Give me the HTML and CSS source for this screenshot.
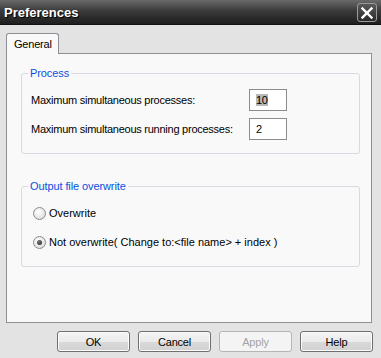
FILE: index.html
```html
<!DOCTYPE html>
<html lang="en">
<head>
  <meta charset="UTF-8">
  <title>Preferences</title>
  <link rel="stylesheet" href="styles.css">
</head>
<body>
  <div class="window">
    <div class="titlebar">
      <span class="title">Preferences</span>
      <span class="close">
        <svg width="12" height="12" viewBox="0 0 12 12">
          <path d="M1.5 1.5 L10.5 10.5 M10.5 1.5 L1.5 10.5" stroke="#fff" stroke-width="2.4" stroke-linecap="square"/>
        </svg>
      </span>
    </div>

    <div class="tabs">
      <span class="tab">General</span>
    </div>

    <div class="panel">
      <fieldset class="group group-process">
        <legend>Process</legend>
        <div class="field-grid">
          <label>Maximum simultaneous processes:</label>
          <span class="box"><span class="sel">10</span></span>
          <label>Maximum simultaneous running processes:</label>
          <span class="box">2</span>
        </div>
      </fieldset>

      <fieldset class="group group-output">
        <legend>Output file overwrite</legend>
        <div class="radio"><span class="dot"></span>Overwrite</div>
        <div class="radio checked"><span class="dot"></span>Not overwrite( Change to:&lt;file name&gt; + index )</div>
      </fieldset>
    </div>

    <div class="actions">
      <button class="btn">OK</button>
      <button class="btn">Cancel</button>
      <button class="btn" disabled>Apply</button>
      <button class="btn">Help</button>
    </div>
  </div>
</body>
</html>
```

FILE: styles.css
```css
body {
  margin: 0;
  background: #e3e3e3;
  font-family: 'Liberation Sans', Arial, sans-serif;
  font-size: 11px;
  letter-spacing: -0.25px;
  color: #000;
}

.window {
  display: flex;
  flex-direction: column;
  height: 358px;
}

.titlebar {
  height: 25px;
  display: flex;
  align-items: center;
  justify-content: space-between;
  padding: 0 4px 0 4px;
  background: linear-gradient(#6a6a6a, #3a3a3a 45%, #1e1e1e);
  border-bottom: 1px solid #111;
  box-sizing: border-box;
}

.title {
  color: #fff;
  font-weight: bold;
  font-size: 13px;
  letter-spacing: 0;
  text-shadow: 1px 1px 1px #000;
}

.close {
  width: 20px;
  height: 19px;
  margin-top: 1px;
  box-sizing: border-box;
  border: 1px solid #9a9a9a;
  border-radius: 3px;
  background: linear-gradient(#5a5a5a, #2a2a2a);
  display: flex;
  align-items: center;
  justify-content: center;
}

.tabs {
  display: flex;
  padding: 8px 0 0 6px;
}

.tab {
  position: relative;
  z-index: 1;
  width: 53px;
  height: 21px;
  margin-bottom: -1px;
  box-sizing: border-box;
  padding: 4px 0 0 7px;
  background: #f9f9f9;
  border: 1px solid #8d8f94;
  border-bottom: none;
  border-radius: 3px 3px 0 0;
  letter-spacing: -0.2px;
}

.panel {
  height: 270px;
  box-sizing: border-box;
  margin: 0 9px 0 6px;
  padding: 12px 11px 0 14px;
  background: #f9f9f9;
  border: 1px solid #8d8f94;
}

.group {
  margin: 0;
  padding: 0 6px 13px 6px;
  border: 1px solid #d5dbe0;
  border-radius: 3px;
  min-width: 0;
}

.group legend {
  padding: 0 2px;
  line-height: 14px;
  color: #0b4fe0;
  letter-spacing: -0.1px;
}

.group-output {
  margin-top: 25px;
  padding-bottom: 15px;
}

.field-grid {
  display: grid;
  grid-template-columns: 218px 38px;
  grid-auto-rows: 22px;
  row-gap: 7px;
  margin: 9px 0 0 3px;
  align-items: center;
}

.box {
  height: 22px;
  box-sizing: border-box;
  border: 1px solid #8c8c8c;
  background: #fff;
  padding: 3px 0 0 6px;
  line-height: 14px;
}

.sel {
  background: #b8b8b8;
}

.radio {
  display: flex;
  align-items: center;
  height: 18px;
  margin: 11px 0 0 5px;
  letter-spacing: 0;
  white-space: pre;
}

.radio + .radio {
  margin-top: 11px;
}

.dot {
  width: 13px;
  height: 13px;
  box-sizing: border-box;
  border-radius: 50%;
  border: 1px solid #8a8a8a;
  background: radial-gradient(circle at 40% 35%, #ffffff, #e6e6e6 60%, #cfcfcf);
  margin-right: 3px;
  display: flex;
  align-items: center;
  justify-content: center;
}

.radio.checked .dot::after {
  content: "";
  width: 5px;
  height: 5px;
  border-radius: 50%;
  background: radial-gradient(circle at 40% 35%, #777, #222);
}

.actions {
  display: flex;
  justify-content: flex-end;
  gap: 8px;
  padding: 8px 8px 0 0;
}

.btn {
  width: 73px;
  height: 21px;
  padding: 0;
  font-family: inherit;
  font-size: 11px;
  letter-spacing: -0.2px;
  color: #000;
  border: 1px solid #6f6f6f;
  border-radius: 3px;
  background: linear-gradient(#f4f4f4, #ebebeb 50%, #d9d9d9 51%, #d2d2d2);
  box-shadow: inset 0 0 0 1px #fcfcfc;
}

.btn:disabled {
  color: #a3a3a3;
  border-color: #b5b5b5;
  background: #f4f4f4;
  box-shadow: none;
}
```
